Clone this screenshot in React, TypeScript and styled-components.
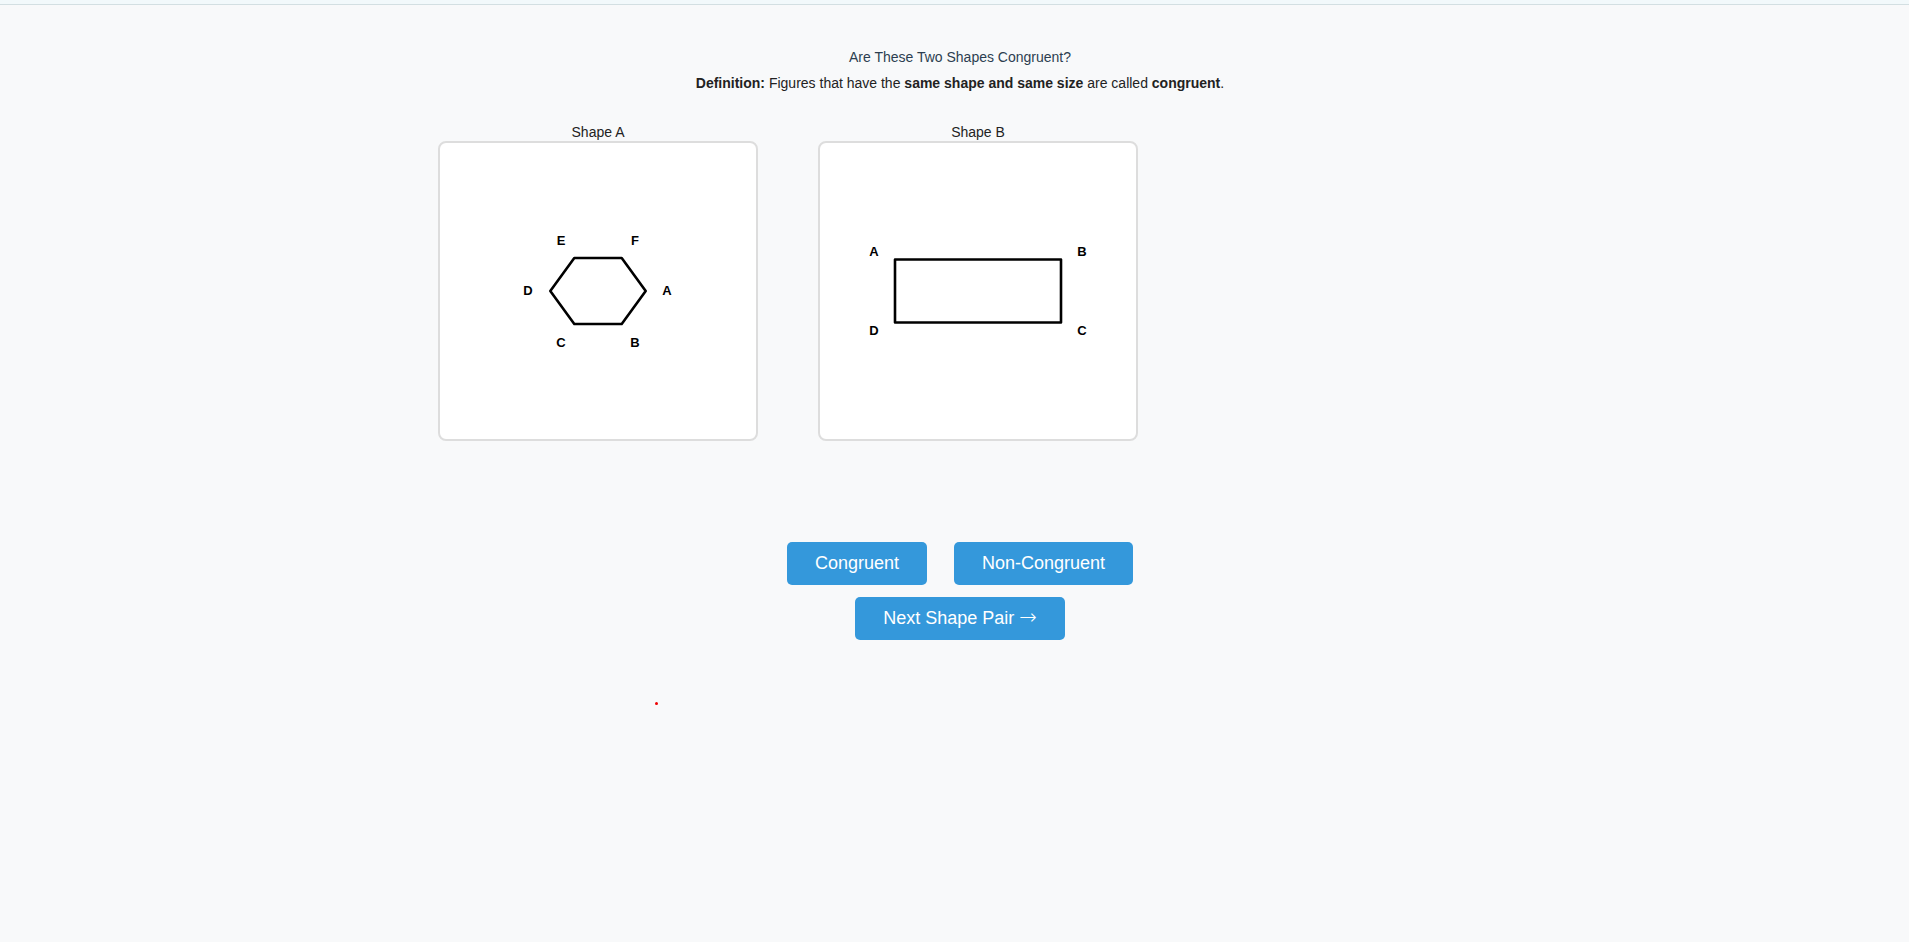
import React from 'react'
import styled, { createGlobalStyle } from 'styled-components'

const GlobalStyle = createGlobalStyle`
  html, body {
    margin: 0;
    padding: 0;
    background: #f8f9fa;
    font-family: 'Liberation Sans', Arial, sans-serif;
  }
`

const Page = styled.div`
  position: relative;
  min-height: 942px;
  background: #f8f9fa;
`

const TopStrip = styled.div`
  height: 4px;
  background: #f2f9fb;
  border-bottom: 1px solid #d3dfe2;
`

const Header = styled.div`
  display: flex;
  flex-direction: column;
  align-items: center;
  gap: 10px;
  padding: 44px 0 0 11px;
`

const Title = styled.div`
  font-size: 14px;
  line-height: 16px;
  color: #2c3e50;
`

const Definition = styled.div`
  font-size: 14px;
  line-height: 16px;
  color: #222;
  b {
    font-weight: bold;
  }
`

const ShapesRow = styled.div`
  display: flex;
  gap: 60px;
  padding-left: 438px;
  margin-top: 33px;
`

const ShapeColumn = styled.div`
  display: flex;
  flex-direction: column;
  align-items: center;
  width: 320px;
`

const ShapeLabel = styled.div`
  font-size: 14px;
  line-height: 16px;
  color: #222;
  margin-bottom: 1px;
`

const ShapeCard = styled.div`
  box-sizing: border-box;
  width: 320px;
  height: 300px;
  background: #fff;
  border: 2px solid #ddd;
  border-radius: 8px;
  overflow: hidden;
  svg {
    display: block;
  }
`

const Actions = styled.div`
  display: flex;
  flex-direction: column;
  align-items: center;
  gap: 12px;
  margin-top: 101px;
  padding-left: 11px;
`

const ButtonRow = styled.div`
  display: flex;
  gap: 27px;
`

const ActionButton = styled.button`
  background: #3498db;
  color: #fff;
  border: none;
  border-radius: 5px;
  padding: 11px 28px;
  font-family: 'Liberation Sans', Arial, sans-serif;
  font-size: 18px;
  line-height: 21px;
  cursor: pointer;
  &:hover {
    background: #2d89c8;
  }
`

const Arrow = styled.span`
  font-family: 'DejaVu Sans', sans-serif;
  font-size: 21px;
  font-weight: 200;
  line-height: 0;
`

const Dot = styled.div`
  position: absolute;
  left: 655px;
  top: 702px;
  width: 3px;
  height: 3px;
  border-radius: 50%;
  background: #e00;
`

type Vertex = { label: string; lx: number; ly: number }

// vertex labels sit just outside the outline, in card coordinates (center 158,148)
const hexLabels: Vertex[] = [
  { label: 'A', lx: 227, ly: 147.5 },
  { label: 'B', lx: 195, ly: 199 },
  { label: 'C', lx: 121, ly: 199 },
  { label: 'D', lx: 88, ly: 147.5 },
  { label: 'E', lx: 121, ly: 97 },
  { label: 'F', lx: 195, ly: 97 },
]

const rectLabels: Vertex[] = [
  { label: 'A', lx: 54, ly: 108.5 },
  { label: 'B', lx: 262, ly: 108.5 },
  { label: 'C', lx: 262, ly: 187 },
  { label: 'D', lx: 54, ly: 187 },
]

const VertexText = ({ v }: { v: Vertex }) => (
  <text
    x={v.lx}
    y={v.ly}
    textAnchor="middle"
    dominantBaseline="central"
    fontFamily="'Liberation Sans', Arial, sans-serif"
    fontWeight="bold"
    fontSize={13}
    fill="#000"
  >
    {v.label}
  </text>
)

function Hexagon() {
  return (
    <svg width={316} height={296} viewBox="0 0 316 296">
      <polygon
        points="205.7,148 181.7,181 134.3,181 110.3,148 134.3,115 181.7,115"
        fill="none"
        stroke="#000"
        strokeWidth={2.6}
        strokeLinejoin="round"
      />
      {hexLabels.map((v) => (
        <VertexText key={v.label} v={v} />
      ))}
    </svg>
  )
}

function Rectangle() {
  return (
    <svg width={316} height={296} viewBox="0 0 316 296">
      <rect
        x={75}
        y={116.5}
        width={166}
        height={63}
        fill="none"
        stroke="#000"
        strokeWidth={2.6}
        strokeLinejoin="round"
      />
      {rectLabels.map((v) => (
        <VertexText key={v.label} v={v} />
      ))}
    </svg>
  )
}

export default function App() {
  return (
    <Page>
      <GlobalStyle />
      <TopStrip />
      <Header>
        <Title>Are These Two Shapes Congruent?</Title>
        <Definition>
          <b>Definition:</b> Figures that have the <b>same shape and same size</b> are called{' '}
          <b>congruent</b>.
        </Definition>
      </Header>
      <ShapesRow>
        <ShapeColumn>
          <ShapeLabel>Shape A</ShapeLabel>
          <ShapeCard>
            <Hexagon />
          </ShapeCard>
        </ShapeColumn>
        <ShapeColumn>
          <ShapeLabel>Shape B</ShapeLabel>
          <ShapeCard>
            <Rectangle />
          </ShapeCard>
        </ShapeColumn>
      </ShapesRow>
      <Actions>
        <ButtonRow>
          <ActionButton>Congruent</ActionButton>
          <ActionButton>Non-Congruent</ActionButton>
        </ButtonRow>
        <ActionButton>
          Next Shape Pair <Arrow>→</Arrow>
        </ActionButton>
      </Actions>
      <Dot />
    </Page>
  )
}
